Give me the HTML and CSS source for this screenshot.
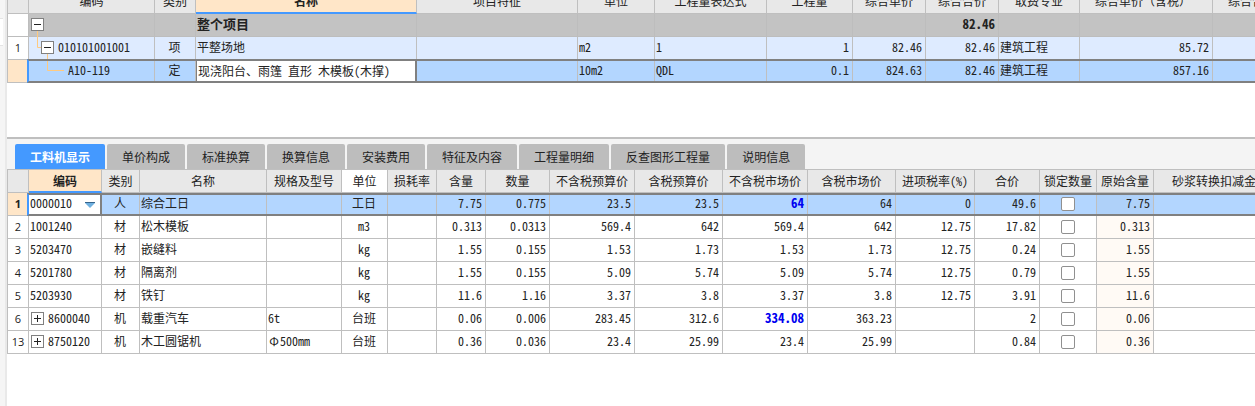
FILE: index.html
```html
<!DOCTYPE html>
<html lang="zh-CN">
<head>
<meta charset="utf-8">
<title>工料机显示</title>
<link rel="stylesheet" href="styles.css">
</head>
<body>
<div class="app">
<aside class="rail"><div class="rail-tab"></div></aside>
<main class="main">
<section class="pane pane-items">
<table class="grid items">
<colgroup><col class="w22"><col class="w126"><col class="w41"><col class="w221"><col class="w161"><col class="w77"><col class="w112"><col class="w86"><col class="w73"><col class="w73"><col class="w81"><col class="w133"><col class="w133"></colgroup>
<thead><tr><th></th><th>编码</th><th>类别</th><th class="current">名称</th><th>项目特征</th><th>单位</th><th>工程量表达式</th><th>工程量</th><th>综合单价</th><th>综合合价</th><th>取费专业</th><th class="full">综合单价（含税）</th><th class="full">综合合价（含税）</th></tr></thead>
<tbody>
<tr class="project"><td class="rownum"></td><td><div class="tree"><button class="toggle" aria-label="折叠"><svg viewBox="1 1 11 11"><path d="M3 6.5h7"/></svg></button></div></td><td></td><td>整个项目</td><td></td><td></td><td></td><td></td><td></td><td class="num">82.46</td><td></td><td></td><td></td></tr>
<tr class="item"><td class="rownum">1</td><td><div class="tree"><svg class="branch b1" viewBox="0 0 12 22"><path d="M8.5 -6V10.5H12"/></svg><button class="toggle" aria-label="折叠"><svg viewBox="1 1 11 11"><path d="M3 6.5h7"/></svg></button><span>010101001001</span></div></td><td class="mid">项</td><td>平整场地</td><td></td><td>m2</td><td>1</td><td class="num">1</td><td class="num">82.46</td><td class="num">82.46</td><td>建筑工程</td><td class="num">85.72</td><td></td></tr>
<tr class="selected"><td class="rownum"></td><td><div class="tree"><svg class="branch b2" viewBox="0 0 35 22"><path d="M18.5 -6V10.5H35"/></svg><span>A10-119</span></div></td><td class="mid">定</td><td class="editing"><input class="edit" type="text" aria-label="名称" value="现浇阳台、雨篷 直形 木模板(木撑)"></td><td></td><td>10m2</td><td>QDL</td><td class="num">0.1</td><td class="num">824.63</td><td class="num">82.46</td><td>建筑工程</td><td class="num">857.16</td><td></td></tr>
</tbody>
</table>
</section>
<section class="pane pane-detail">
<nav class="tabs"><button class="tab active">工料机显示</button><button class="tab">单价构成</button><button class="tab">标准换算</button><button class="tab">换算信息</button><button class="tab">安装费用</button><button class="tab">特征及内容</button><button class="tab">工程量明细</button><button class="tab">反查图形工程量</button><button class="tab">说明信息</button></nav>
<table class="grid resources">
<colgroup><col class="w22"><col class="w73"><col class="w38"><col class="w127"><col class="w75"><col class="w46"><col class="w49"><col class="w49"><col class="w64"><col class="w85"><col class="w88"><col class="w85"><col class="w88"><col class="w79"><col class="w65"><col class="w57"><col class="w57"><col class="w133"></colgroup>
<thead><tr><th></th><th class="current">编码</th><th>类别</th><th>名称</th><th>规格及型号</th><th class="plain">单位</th><th>损耗率</th><th>含量</th><th>数量</th><th>不含税预算价</th><th>含税预算价</th><th>不含税市场价</th><th>含税市场价</th><th>进项税率(%)</th><th>合价</th><th>锁定数量</th><th>原始含量</th><th>砂浆转换扣减金额</th></tr></thead>
<tbody>
<tr class="selected"><td class="rownum">1</td><td class="editing"><div class="picker"><select aria-label="编码"><option>0000010</option></select><svg viewBox="0 0 10 6"><path class="arrow" d="M0 1h10L5 6z"/><path class="arrow-top" d="M0 0h10v1H0z"/></svg></div></td><td class="mid">人</td><td>综合工日</td><td></td><td class="mid">工日</td><td></td><td class="num">7.75</td><td class="num">0.775</td><td class="num">23.5</td><td class="num">23.5</td><td class="num changed">64</td><td class="num">64</td><td class="num">0</td><td class="num">49.6</td><td class="mid"><input type="checkbox" aria-label="锁定数量 1"></td><td class="num origin">7.75</td><td></td></tr>
<tr><td class="rownum">2</td><td>1001240</td><td class="mid">材</td><td>松木模板</td><td></td><td class="mid">m3</td><td></td><td class="num">0.313</td><td class="num">0.0313</td><td class="num">569.4</td><td class="num">642</td><td class="num">569.4</td><td class="num">642</td><td class="num">12.75</td><td class="num">17.82</td><td class="mid"><input type="checkbox" aria-label="锁定数量 2"></td><td class="num origin">0.313</td><td></td></tr>
<tr><td class="rownum">3</td><td>5203470</td><td class="mid">材</td><td>嵌缝料</td><td></td><td class="mid">kg</td><td></td><td class="num">1.55</td><td class="num">0.155</td><td class="num">1.53</td><td class="num">1.73</td><td class="num">1.53</td><td class="num">1.73</td><td class="num">12.75</td><td class="num">0.24</td><td class="mid"><input type="checkbox" aria-label="锁定数量 3"></td><td class="num origin">1.55</td><td></td></tr>
<tr><td class="rownum">4</td><td>5201780</td><td class="mid">材</td><td>隔离剂</td><td></td><td class="mid">kg</td><td></td><td class="num">1.55</td><td class="num">0.155</td><td class="num">5.09</td><td class="num">5.74</td><td class="num">5.09</td><td class="num">5.74</td><td class="num">12.75</td><td class="num">0.79</td><td class="mid"><input type="checkbox" aria-label="锁定数量 4"></td><td class="num origin">1.55</td><td></td></tr>
<tr><td class="rownum">5</td><td>5203930</td><td class="mid">材</td><td>铁钉</td><td></td><td class="mid">kg</td><td></td><td class="num">11.6</td><td class="num">1.16</td><td class="num">3.37</td><td class="num">3.8</td><td class="num">3.37</td><td class="num">3.8</td><td class="num">12.75</td><td class="num">3.91</td><td class="mid"><input type="checkbox" aria-label="锁定数量 5"></td><td class="num origin">11.6</td><td></td></tr>
<tr><td class="rownum">6</td><td><div class="tree"><button class="toggle" aria-label="展开"><svg viewBox="1 1 11 11"><path d="M3 6.5h7M6.5 3v7"/></svg></button><span>8600040</span></div></td><td class="mid">机</td><td>载重汽车</td><td>6t</td><td class="mid">台班</td><td></td><td class="num">0.06</td><td class="num">0.006</td><td class="num">283.45</td><td class="num">312.6</td><td class="num changed">334.08</td><td class="num">363.23</td><td class="num"></td><td class="num">2</td><td class="mid"><input type="checkbox" aria-label="锁定数量 6"></td><td class="num origin">0.06</td><td></td></tr>
<tr><td class="rownum">13</td><td><div class="tree"><button class="toggle" aria-label="展开"><svg viewBox="1 1 11 11"><path d="M3 6.5h7M6.5 3v7"/></svg></button><span>8750120</span></div></td><td class="mid">机</td><td>木工圆锯机</td><td><span class="symbol">Φ</span>500mm</td><td class="mid">台班</td><td></td><td class="num">0.36</td><td class="num">0.036</td><td class="num">23.4</td><td class="num">25.99</td><td class="num">23.4</td><td class="num">25.99</td><td class="num"></td><td class="num">0.84</td><td class="mid"><input type="checkbox" aria-label="锁定数量 13"></td><td class="num origin">0.36</td><td></td></tr>
</tbody>
</table>
</section>
</main>
</div>
</body>
</html>
```

FILE: styles.css
```css
* { box-sizing: border-box; }
body {
  margin: 0;
  background: #fff;
  color: #222;
  font: 12px/16px "Noto Sans CJK SC", sans-serif;
  font-feature-settings: "hwid";
  overflow: hidden;
}
button, input, select { font: inherit; color: inherit; font-feature-settings: inherit; margin: 0; }
.app { display: flex; min-height: 100vh; }
.rail { flex: 0 0 7px; background: #f5f5f5; border-right: 2px solid #e9e9e9; padding-top: 18px; }
.rail-tab { width: 3px; height: 28px; background: #fff; border: solid #e4e4e4; border-width: 1px 0; }
.main { flex: 1; min-width: 0; }
.pane { overflow: hidden; }
.pane-items { height: 137px; }
.pane-detail { border-top: 2px solid #bfbfbf; }

.grid { table-layout: fixed; width: 0; border-collapse: separate; border-spacing: 0; }
.items { margin-top: -9px; }
.grid th, .grid td {
  height: 23px;
  padding: 0 3px 2px 1px;
  border: solid #bfbfbf;
  border-width: 0 1px 1px 0;
  text-align: left;
  font-weight: 400;
  white-space: nowrap;
  overflow: hidden;
}
.grid th { background: #e8e8e8; text-align: center; padding: 0; }
.items th { padding-bottom: 2px; }
.grid th.full { font-feature-settings: normal; padding-right: 6px; }
.grid th:first-child, .grid td:first-child { border-left-width: 1px; }
.grid th.current { background: #ffe6c8; font-weight: 700; border-bottom: 2px solid #4499ff; }
.grid th.plain { background: #fff; }
.grid td.num { text-align: right; }
.grid td.mid { text-align: center; padding: 0 1px 2px 0; }
.grid td.changed { color: #0000f0; font-weight: 700; font-size: 13px; }
.grid td.origin { background: #fffaf5; }
.grid td.rownum {
  padding: 0;
  background: #fff;
  text-align: center;
  font-family: "Open Sans", sans-serif;
  font-size: 11px;
}
.symbol { display: inline-block; width: 12px; text-align: center; }
.project td { background: #c3c3c3; border-color: #bdbdbd; font-size: 13px; }
.grid .project td { font-weight: 700; }
.item td { background: #deebff; }
.selected { position: relative; }
.selected td { background: #b3d6ff; }
.grid .selected td.origin { background: #afd1f9; }
.grid .selected td.rownum { background: #ffe6c8; font-weight: 700; }
.selected::after {
  content: "";
  position: absolute;
  inset: 0 0 0 20px;
  border: solid #808080;
  border-width: 2px 0;
  border-left: 2px solid #4499ff;
  pointer-events: none;
}
.items .selected::after { top: -1px; }
.grid .selected td.editing { background: #fff; padding: 0 0 2px; border-right: 2px solid #808080; }
.items .selected td.editing { border-left: 1px solid #808080; }
.edit { display: block; width: 100%; height: 20px; border: 0; padding: 0 1px; background: none; outline: 0; }

.tree { display: flex; align-items: flex-start; height: 22px; margin-bottom: -2px; padding-left: 1px; }
.tree span { padding: 2px 0 0 4px; }
.toggle { width: 13px; height: 13px; padding: 0; border: 1px solid #808080; background: #fff; flex: none; margin-top: 4px; }
.toggle svg { display: block; width: 11px; height: 11px; }
.toggle path { stroke: #222; fill: none; }
.branch { height: 22px; flex: none; overflow: visible; margin-left: -2px; }
.branch path { stroke: #ffca80; fill: none; }
.b1 { width: 12px; }
.b2 { width: 35px; }
.grid td:has(.tree) { overflow: visible; }

.picker { display: grid; grid-template-columns: 1fr 10px; align-items: center; padding-right: 5px; }
.picker select { grid-area: 1 / 1 / 2 / 3; width: 100%; height: 20px; appearance: none; border: 0; padding: 0 1px; background: none; outline: 0; }
.picker svg { grid-area: 1 / 2; width: 10px; height: 6px; margin-top: 3px; pointer-events: none; }
.arrow { fill: #6fb0e0; }
.arrow-top { fill: #35648c; }

input[type="checkbox"] {
  appearance: none;
  display: block;
  width: 14px;
  height: 14px;
  margin: 2px auto 0;
  border: 1px solid #909090;
  border-radius: 2px;
  background: #fff;
}

.tabs { display: flex; gap: 2px; padding: 5px 0 0 8px; background: #f4f4f4; border-bottom: 1px solid #bfbfbf; }
.tab { height: 25px; padding: 0 15px; border: 0; border-radius: 2px 2px 0 0; background: #bdbdbd; white-space: nowrap; flex: none; }
.tab.active { background: #4499ff; color: #fff; font-weight: 700; }

.w22 { width: 22px; }
.w38 { width: 38px; }
.w41 { width: 41px; }
.w46 { width: 46px; }
.w49 { width: 49px; }
.w57 { width: 57px; }
.w64 { width: 64px; }
.w65 { width: 65px; }
.w73 { width: 73px; }
.w75 { width: 75px; }
.w77 { width: 77px; }
.w79 { width: 79px; }
.w81 { width: 81px; }
.w85 { width: 85px; }
.w86 { width: 86px; }
.w88 { width: 88px; }
.w112 { width: 112px; }
.w126 { width: 126px; }
.w127 { width: 127px; }
.w133 { width: 133px; }
.w161 { width: 161px; }
.w221 { width: 221px; }
```
